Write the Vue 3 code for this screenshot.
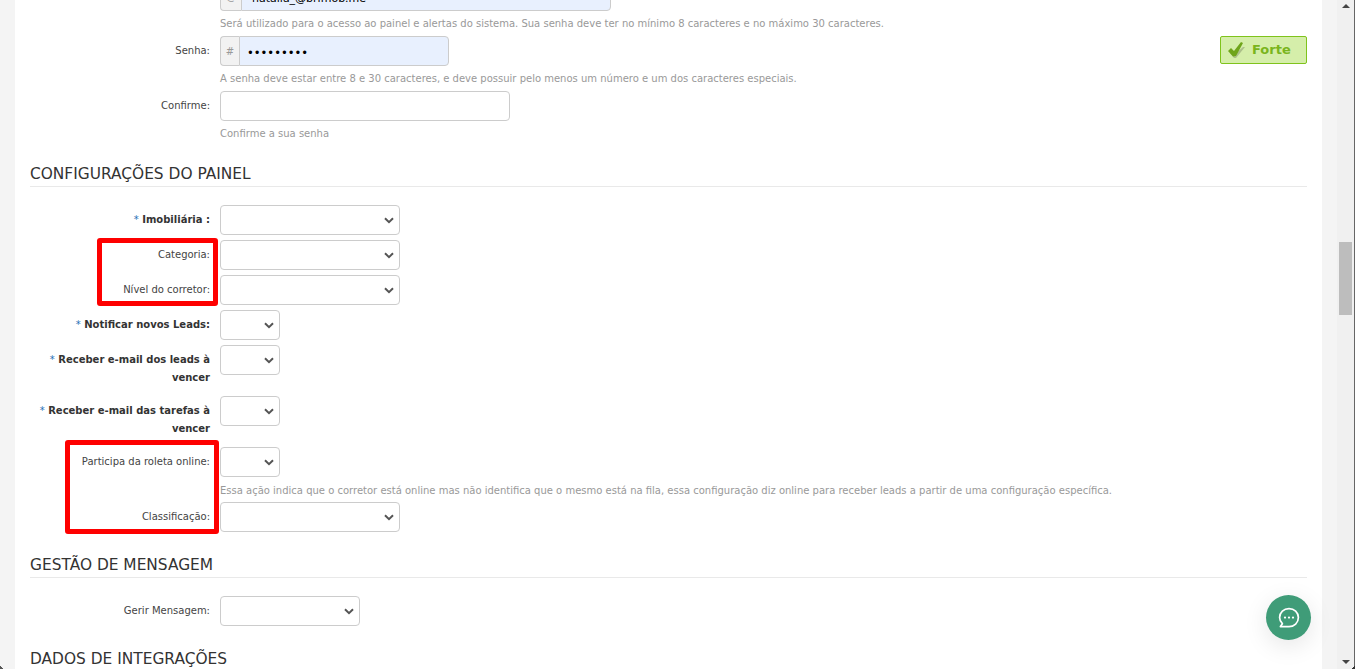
<script setup>
const helpPass = 'A senha deve estar entre 8 e 30 caracteres, e deve possuir pelo menos um número e um dos caracteres especiais.'
const helpMail = 'Será utilizado para o acesso ao painel e alertas do sistema. Sua senha deve ter no mínimo 8 caracteres e no máximo 30 caracteres.'
const helpRoleta = 'Essa ação indica que o corretor está online mas não identifica que o mesmo está na fila, essa configuração diz online para receber leads a partir de uma configuração específica.'
</script>

<template>
  <div class="window">
    <main class="page">
      <div class="sheet">
        <div class="row row-first">
          <label class="lbl"></label>
          <div class="field">
            <div class="group g-mail"><span class="addon">@</span><input class="auto mail" value="natalia_@brimob.me" /></div>
            <p class="help">{{ helpMail }}</p>
          </div>
        </div>

        <div class="row">
          <label class="lbl">Senha:</label>
          <div class="field">
            <div class="group g-pass"><span class="addon">#</span><input class="auto pass" type="password" value="123456789" /></div>
            <p class="help">{{ helpPass }}</p>
          </div>
          <div class="strength">
            <svg class="check" width="18" height="18" viewBox="0 0 18 18">
              <path d="M3 12 L7 17 L9 17 L18 6 L16 6 L8 13 L6 11 Z" fill="#8a9a70" opacity=".55"/>
              <path d="M1 10 L4 7 L7 10 L14 1 L16 2 L9 15 L6 15.5 Z" fill="#6fa51a"/>
            </svg>
            <span>Forte</span>
          </div>
        </div>

        <div class="row">
          <label class="lbl">Confirme:</label>
          <div class="field">
            <input class="text" />
            <p class="help">Confirme a sua senha</p>
          </div>
        </div>

        <h3 class="section s-first">CONFIGURAÇÕES DO PAINEL</h3>

        <div class="row"><label class="lbl strong"><i>*</i> Imobiliária :</label><select class="sel w180"></select></div>
        <div class="row"><label class="lbl">Categoria:</label><select class="sel w180"></select></div>
        <div class="row"><label class="lbl">Nível do corretor:</label><select class="sel w180"></select></div>
        <div class="row"><label class="lbl strong"><i>*</i> Notificar novos Leads:</label><select class="sel w60"></select></div>
        <div class="row"><label class="lbl strong tall"><i>*</i> Receber e-mail dos leads à vencer</label><select class="sel w60"></select></div>
        <div class="row"><label class="lbl strong tall"><i>*</i> Receber e-mail das tarefas à vencer</label><select class="sel w60"></select></div>
        <div class="row">
          <label class="lbl">Participa da roleta online:</label>
          <div class="field">
            <select class="sel w60"></select>
            <p class="help help-roleta">{{ helpRoleta }}</p>
          </div>
        </div>
        <div class="row"><label class="lbl">Classificação:</label><select class="sel w180"></select></div>

        <h3 class="section s-msg">GESTÃO DE MENSAGEM</h3>
        <div class="row"><label class="lbl">Gerir Mensagem:</label><select class="sel w140"></select></div>

        <h3 class="section s-int">DADOS DE INTEGRAÇÕES</h3>
      </div>

      <div class="mark mark-a"></div>
      <div class="mark mark-b"></div>
    </main>

    <aside class="scrollbar">
      <span class="arrow up"></span>
      <span class="thumb"></span>
      <span class="arrow down"></span>
    </aside>

    <button class="chat" aria-label="Chat">
      <svg width="24" height="24" viewBox="0 0 24 24" fill="none">
        <path d="M12 2.6c5.2 0 9.4 3.9 9.4 9s-4.2 9-9.4 9H3.4l2-2.9C3.6 16 2.6 14 2.6 11.6c0-5.1 4.2-9 9.4-9z" stroke="#fff" stroke-width="1.7" stroke-linejoin="round"/>
        <circle cx="8" cy="11.6" r="1.1" fill="#fff"/><circle cx="12" cy="11.6" r="1.1" fill="#fff"/><circle cx="16" cy="11.6" r="1.1" fill="#fff"/>
      </svg>
    </button>
  </div>
</template>

<style>
html, body { margin: 0; height: 100%; overflow: hidden; background: #f4f4f4; }
</style>

<style scoped>
.window { position: relative; display: flex; width: 1355px; height: 669px; overflow: hidden; background: #f4f4f4; font-family: "DejaVu Sans", Verdana, sans-serif; color: #333; }
.window::before, .window::after { content: ""; position: absolute; bottom: 0; width: 4px; height: 4px; z-index: 2; }
.window::before { left: 0; background: linear-gradient(45deg, #555 45%, transparent 50%); }
.window::after { right: 0; background: linear-gradient(-45deg, #333 45%, transparent 50%); }
.page { position: relative; flex: none; width: 1322px; height: 669px; padding-left: 15px; box-sizing: border-box; }
.sheet { width: 1307px; height: 669px; overflow: hidden; background: #fff; padding: 0 15px; box-sizing: border-box; }

.row { display: flex; align-items: flex-start; margin-bottom: 5px; position: relative; }
.row-first { margin-top: -19px; }
.lbl { flex: none; box-sizing: border-box; width: 180px; margin-right: 10px; padding-top: 6px; text-align: right; font-size: 10px; line-height: 18px; color: #444; }
.strong { font-weight: 700; color: #333; }
.strong i { font-style: normal; font-weight: 400; color: #2a6fb5; }
.tall { height: 46px; }
.field { flex: none; }
.help { margin: 3px 0 0; font-size: 10px; line-height: 20px; height: 17px; color: #999; white-space: nowrap; }
.help-roleta { margin-top: 4px; height: 16px; }

.group { display: flex; height: 30px; box-sizing: border-box; }
.g-mail { width: 391px; }
.g-pass { width: 229px; }
.addon { flex: none; width: 19px; box-sizing: border-box; display: flex; align-items: center; justify-content: center; background: #f2f2f2; border: 1px solid #ccc; border-right: 0; border-radius: 4px 0 0 4px; font-size: 10px; color: #999; }
.g-mail .addon { width: 21px; }
.auto { flex: 1; min-width: 0; box-sizing: border-box; height: 30px; padding: 0 8px; background: #e8f0fe; border: 1px solid #ccc; border-radius: 0 4px 4px 0; font-family: inherit; font-size: 11px; color: #000; outline: none; }
.mail { padding: 4px 10px 0; }
.pass { padding: 3px 7px 0; font-size: 11.5px; }
.text { display: block; width: 290px; height: 30px; box-sizing: border-box; background: #fff; border: 1px solid #ccc; border-radius: 4px; outline: none; }

.sel { display: block; height: 30px; box-sizing: border-box; appearance: none; -webkit-appearance: none; background: #fff url("data:image/svg+xml,%3Csvg xmlns='http://www.w3.org/2000/svg' width='10' height='7' viewBox='0 0 10 7'%3E%3Cpath d='M1 1.2 L5 5.2 L9 1.2' fill='none' stroke='%23555' stroke-width='2'/%3E%3C/svg%3E") no-repeat right 5px center; border: 1px solid #ccc; border-radius: 4px; outline: none; }
.w180 { width: 180px; }
.w140 { width: 140px; }
.w60 { width: 60px; }

.strength { margin-left: auto; width: 87px; height: 28px; padding: 0 0 2px 6px; box-sizing: border-box; display: flex; align-items: center; gap: 7px; background: #d5eeaa; border: 1px solid #7fc31c; border-radius: 2px; font-size: 13px; font-weight: 700; color: #7ab51d; }
.check { margin-top: 2px; }

.section { margin: 0; font-size: 15.4px; font-weight: 400; line-height: 20px; color: #333; border-bottom: 1px solid #e9e9e9; padding-bottom: 3px; }
.s-first { margin-top: 23px; margin-bottom: 18px; padding-bottom: 2px; }
.s-msg { margin-top: 23px; margin-bottom: 18px; padding-bottom: 2px; }
.s-int { margin-top: 23px; border: 0; }

.mark { position: absolute; box-sizing: border-box; border: 5px solid #fe0000; border-radius: 3px; pointer-events: none; }
.mark-a { left: 97px; top: 238px; width: 121px; height: 68px; }
.mark-b { left: 65px; top: 440px; width: 154px; height: 94px; }

.scrollbar { position: relative; flex: 1; display: flex; flex-direction: column; }
.scrollbar::before { content: ""; position: absolute; left: 15px; right: 0; top: 0; bottom: 0; background: #f0f0f0; border-right: 1px solid #666; }
.thumb { position: absolute; left: 17px; top: 242px; width: 13px; height: 73px; background: #bdbdbd; }
.arrow { position: absolute; left: 20px; width: 0; height: 0; border-left: 4px solid transparent; border-right: 4px solid transparent; }
.up { top: 4px; border-bottom: 4px solid #444; }
.down { bottom: 5px; border-top: 4px solid #444; }

.chat { position: absolute; left: 1266px; top: 595px; width: 45px; height: 45px; padding: 0; border: 0; border-radius: 50%; background: #3f9c78; display: flex; align-items: center; justify-content: center; box-shadow: 0 6px 24px rgba(0,0,0,.1); }
</style>
